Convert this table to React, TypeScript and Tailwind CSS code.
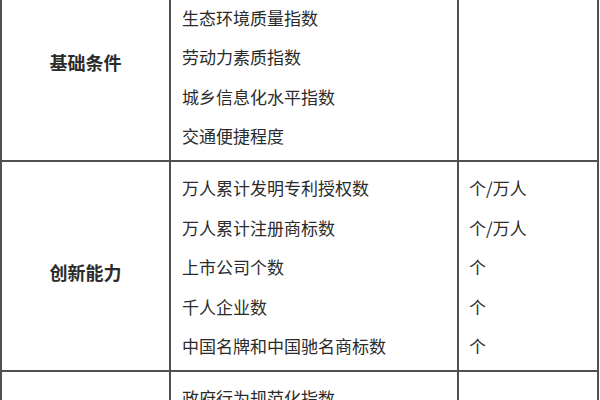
const sections = [
  {
    label: "基础条件",
    rows: [
      { name: "经济发展水平指数", unit: "" },
      { name: "生态环境质量指数", unit: "" },
      { name: "劳动力素质指数", unit: "" },
      { name: "城乡信息化水平指数", unit: "" },
      { name: "交通便捷程度", unit: "" },
    ],
  },
  {
    label: "创新能力",
    rows: [
      { name: "万人累计发明专利授权数", unit: "个/万人" },
      { name: "万人累计注册商标数", unit: "个/万人" },
      { name: "上市公司个数", unit: "个" },
      { name: "千人企业数", unit: "个" },
      { name: "中国名牌和中国驰名商标数", unit: "个" },
    ],
  },
  {
    label: "政府服务",
    rows: [
      { name: "政府行为规范化指数", unit: "" },
      { name: "政务服务效率指数", unit: "" },
      { name: "营商环境满意度", unit: "" },
    ],
  },
];

export default function App() {
  return (
    <div
      className="h-[400px] w-[600px] overflow-hidden bg-white text-[#2b2b2b]"
      style={{ fontFamily: '"Noto Sans CJK SC", "Noto Sans", sans-serif' }}
    >
      <div className="-mt-[50px] w-[599px] border-x-2 border-t-2 border-[#505050]">
        {sections.map((section) => (
          <div
            key={section.label}
            className="grid grid-cols-[169px_288px_1fr] border-b-2 border-[#505050]"
          >
            <div className="flex items-center justify-center border-r-2 border-[#505050] pt-[14px] text-[18px] font-bold">
              {section.label}
            </div>
            <div className="border-r-2 border-[#505050] pt-[6px] pb-[4px] pl-[11px] text-[17px]">
              {section.rows.map((row) => (
                <div key={row.name} className="flex h-[39.6px] items-center whitespace-nowrap">
                  {row.name}
                </div>
              ))}
            </div>
            <div className="pt-[6px] pb-[4px] pl-[10px] text-[17px]">
              {section.rows.map((row) => (
                <div key={row.name} className="flex h-[39.6px] items-center whitespace-nowrap">
                  {row.unit}
                </div>
              ))}
            </div>
          </div>
        ))}
      </div>
    </div>
  );
}
